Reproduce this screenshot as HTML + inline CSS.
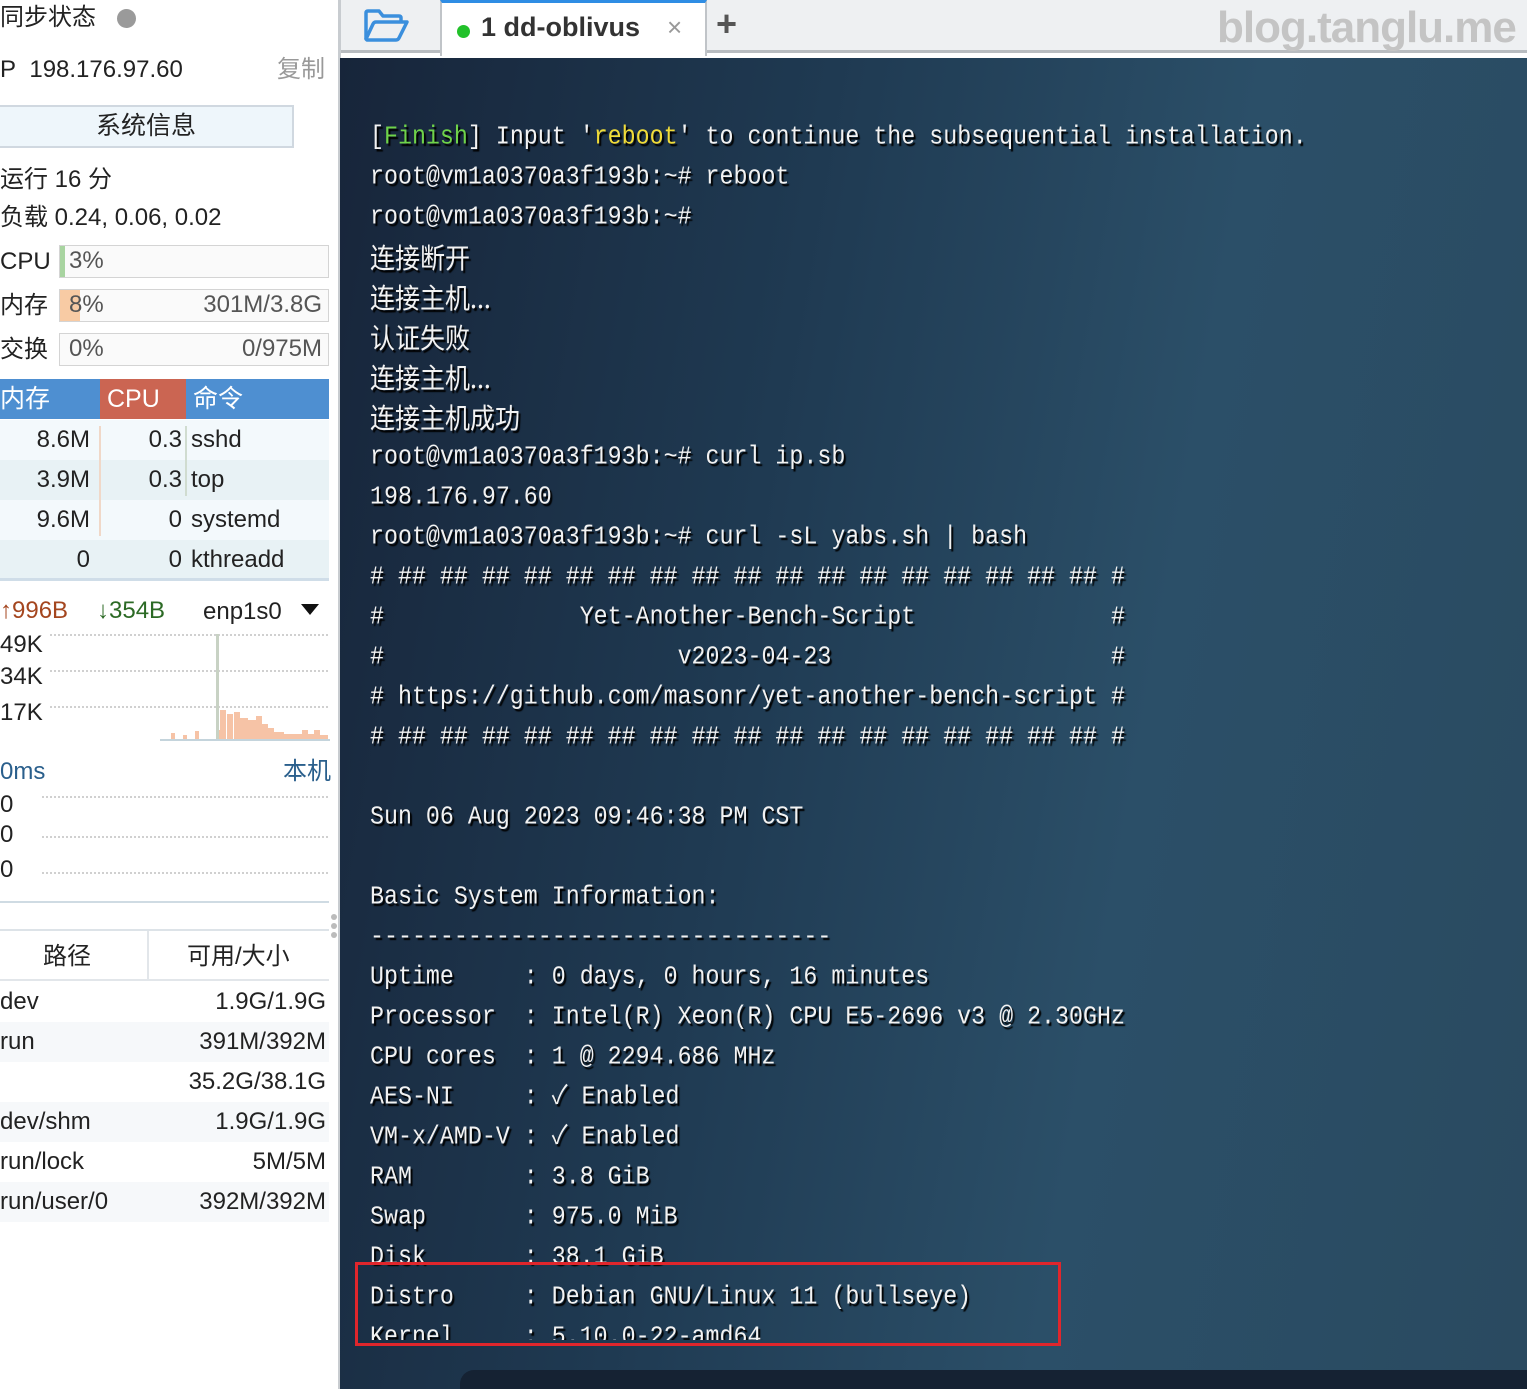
<!DOCTYPE html>
<html><head><meta charset="utf-8"><style>
*{margin:0;padding:0;box-sizing:border-box}
body{width:1527px;height:1389px;overflow:hidden;background:#fff;position:relative;font-family:"Liberation Sans","Noto Sans CJK SC",sans-serif;color:#222}
.a{position:absolute;white-space:nowrap}
.lt{font-size:24px;line-height:30px}
.bar{position:absolute;left:59px;width:270px;height:33px;border:1px solid #d4d4d4;background:#fafafa}
.row{position:absolute;left:0;width:329px;height:40px;font-size:24px;line-height:40px}
.term{position:absolute;left:340px;top:58px;width:1187px;height:1331px;background:linear-gradient(100deg,#17253a 0%,#1f3a52 35%,#2b4f68 65%,#2a4a60 100%);overflow:hidden}
.tl{position:absolute;left:30px;font-family:"Liberation Mono","Noto Sans CJK SC",monospace;font-size:23.3px;color:#f2f2f2;white-space:pre;line-height:40px;text-shadow:2px 2px 1px #000;transform:scaleY(1.12);transform-origin:0 50%}
.cj{font-family:"Noto Sans CJK SC",sans-serif;font-size:25px}
.dot{position:absolute;height:0;border-top:2px dotted #d0d0d0}
</style></head><body>
<div class="a lt" style="left:0;top:3px">同步状态</div>
<div class="a" style="left:117px;top:9px;width:19px;height:19px;border-radius:50%;background:#9a9a9a"></div>
<div class="a lt" style="left:0;top:55px">P&nbsp;&nbsp;198.176.97.60</div>
<div class="a lt" style="left:277px;top:55px;color:#999">复制</div>
<div class="a" style="left:0;top:105px;width:294px;height:43px;background:#eef6fb;border:2px solid #d0d8e0;border-left:none;text-align:center;font-size:25px;line-height:39px">系统信息</div>
<div class="a lt" style="left:0;top:165px">运行 16 分</div>
<div class="a lt" style="left:0;top:203px">负载 0.24, 0.06, 0.02</div>
<div class="a lt" style="left:0;top:247px">CPU</div>
<div class="bar" style="top:245px"><div style="position:absolute;left:0;top:0;width:5px;height:31px;background:#a8d4a0"></div><span class="a lt" style="left:9px;top:0;color:#555">3%</span></div>
<div class="a lt" style="left:0;top:291px">内存</div>
<div class="bar" style="top:289px"><div style="position:absolute;left:0;top:0;width:20px;height:31px;background:#f8cba4"></div><span class="a lt" style="left:9px;top:0;color:#555">8%</span><span class="a lt" style="right:6px;top:0;color:#555">301M/3.8G</span></div>
<div class="a lt" style="left:0;top:335px">交换</div>
<div class="bar" style="top:333px"><span class="a lt" style="left:9px;top:0;color:#555">0%</span><span class="a lt" style="right:6px;top:0;color:#555">0/975M</span></div>
<div class="a" style="left:0;top:379px;width:100px;height:40px;background:#4e8fd1;color:#fff;font-size:25px;line-height:40px">内存</div>
<div class="a" style="left:100px;top:379px;width:86px;height:40px;background:#cb6552;color:#fff;font-size:25px;line-height:40px;padding-left:7px">CPU</div>
<div class="a" style="left:186px;top:379px;width:143px;height:40px;background:#4e8fd1;color:#fff;font-size:25px;line-height:40px;padding-left:7px">命令</div>
<div class="row" style="top:420px;background:#f3f9fc"><span class="a" style="right:239px">8.6M</span><span class="a" style="right:147px">0.3</span><span class="a" style="left:191px">sshd</span></div>
<div class="row" style="top:460px;background:#e8f2f5"><span class="a" style="right:239px">3.9M</span><span class="a" style="right:147px">0.3</span><span class="a" style="left:191px">top</span></div>
<div class="row" style="top:500px;background:#f3f9fc"><span class="a" style="right:239px">9.6M</span><span class="a" style="right:147px">0</span><span class="a" style="left:191px">systemd</span></div>
<div class="row" style="top:540px;background:#e8f2f5"><span class="a" style="right:239px">0</span><span class="a" style="right:147px">0</span><span class="a" style="left:191px">kthreadd</span></div>
<div class="a" style="left:99px;top:426px;width:2px;height:110px;background:#f0d8c8"></div>
<div class="a" style="left:185px;top:426px;width:2px;height:70px;background:#d0dcd0"></div>
<div class="a" style="left:0;top:578px;width:329px;height:3px;background:#cfdde8"></div>
<div class="a lt" style="left:0;top:596px;color:#a4461f">↑996B</div>
<div class="a lt" style="left:97px;top:596px;color:#2c6a25"><b>↓</b>354B</div>
<div class="a lt" style="left:203px;top:597px">enp1s0</div>
<div class="a" style="left:301px;top:604px;width:0;height:0;border-left:9px solid transparent;border-right:9px solid transparent;border-top:11px solid #111"></div>
<div class="a lt" style="left:0;top:630px">49K</div><div class="a lt" style="left:0;top:662px">34K</div><div class="a lt" style="left:0;top:698px">17K</div>
<div class="dot" style="left:50px;top:634px;width:278px"></div>
<div class="dot" style="left:50px;top:670px;width:278px"></div>
<div class="dot" style="left:50px;top:706px;width:278px"></div>
<svg class="a" style="left:160px;top:634px" width="170" height="108">
<g fill="#f6c3a6"><rect x="11" y="99" width="4" height="7"/><rect x="23" y="101" width="4" height="5"/><rect x="35" y="97" width="4" height="9"/><rect x="57" y="96" width="4" height="10"/><rect x="60" y="76" width="6" height="30"/><rect x="67" y="80" width="6" height="26"/><rect x="74" y="78" width="6" height="28"/><rect x="80" y="84" width="8" height="22"/><rect x="88" y="86" width="8" height="20"/><rect x="96" y="82" width="6" height="24"/><rect x="102" y="90" width="6" height="16"/><rect x="108" y="94" width="6" height="12"/><rect x="114" y="98" width="10" height="8"/><rect x="124" y="100" width="18" height="6"/><rect x="142" y="96" width="6" height="10"/><rect x="148" y="100" width="6" height="6"/><rect x="154" y="96" width="6" height="10"/><rect x="160" y="101" width="8" height="5"/></g>
<rect x="56" y="0" width="3" height="106" fill="#c8d2c4"/>
<rect x="0" y="105" width="170" height="2" fill="#c4d4dc"/></svg>
<div class="a lt" style="left:0;top:757px;color:#2a5f8c">0ms</div>
<div class="a lt" style="left:283px;top:757px;color:#2a5f8c">本机</div>
<div class="a lt" style="left:0;top:790px">0</div><div class="a lt" style="left:0;top:820px">0</div><div class="a lt" style="left:0;top:855px">0</div>
<div class="dot" style="left:42px;top:796px;width:286px"></div>
<div class="dot" style="left:42px;top:836px;width:286px"></div>
<div class="dot" style="left:42px;top:872px;width:286px"></div>
<div class="a" style="left:0;top:901px;width:329px;height:2px;background:#cfdbe3"></div>
<div class="a" style="left:331px;top:914px;width:6px;height:6px;border-radius:50%;background:#bbb"></div>
<div class="a" style="left:331px;top:923px;width:6px;height:6px;border-radius:50%;background:#bbb"></div>
<div class="a" style="left:331px;top:932px;width:6px;height:6px;border-radius:50%;background:#bbb"></div>
<div class="a" style="left:0;top:929px;width:329px;height:2px;background:#dde3e8"></div>
<div class="a" style="left:147px;top:931px;width:2px;height:49px;background:#e2e6ea"></div>
<div class="a lt" style="left:43px;top:942px">路径</div>
<div class="a lt" style="left:187px;top:942px">可用/大小</div>
<div class="a" style="left:0;top:979px;width:329px;height:2px;background:#e2e6ea"></div>
<div class="row" style="top:982px"><span class="a" style="left:0">dev</span><span class="a" style="right:3px">1.9G/1.9G</span></div>
<div class="row" style="top:1022px;background:#f6f8fa"><span class="a" style="left:0">run</span><span class="a" style="right:3px">391M/392M</span></div>
<div class="row" style="top:1062px"><span class="a" style="right:3px">35.2G/38.1G</span></div>
<div class="row" style="top:1102px;background:#f6f8fa"><span class="a" style="left:0">dev/shm</span><span class="a" style="right:3px">1.9G/1.9G</span></div>
<div class="row" style="top:1142px"><span class="a" style="left:0">run/lock</span><span class="a" style="right:3px">5M/5M</span></div>
<div class="row" style="top:1182px;background:#f6f8fa"><span class="a" style="left:0">run/user/0</span><span class="a" style="right:3px">392M/392M</span></div>
<div class="a" style="left:338px;top:0;width:3px;height:1389px;background:#c8ccd0"></div>
<div class="a" style="left:341px;top:0;width:1186px;height:58px;background:#eef0f2"></div>
<div class="a" style="left:341px;top:50px;width:1186px;height:3px;background:#b8bcc0"></div>
<div class="a" style="left:341px;top:53px;width:1186px;height:5px;background:#fff"></div>
<svg class="a" style="left:363px;top:8px" width="48" height="36" viewBox="0 0 48 36"><path d="M3 31V5q0-2 2-2h11l4 5h16q2 0 2 2v5" fill="none" stroke="#3b8fdd" stroke-width="3.5" stroke-linejoin="round"/><path d="M3 31l7-15q1-2 3-2h31l-8 16q-1 2-3 2H4z" fill="none" stroke="#3b8fdd" stroke-width="3.5" stroke-linejoin="round"/></svg>
<div class="a" style="left:440px;top:0;width:267px;height:56px;background:#fff;border-left:2px solid #c0c4c8;border-right:2px solid #c0c4c8;border-top:3px solid #2f8de4"></div>
<div class="a" style="left:457px;top:25px;width:13px;height:13px;border-radius:50%;background:#22c12a"></div>
<div class="a" style="left:481px;top:9px;font-size:27px;font-weight:bold;color:#333;line-height:36px">1 dd-oblivus</div>
<div class="a" style="left:667px;top:11px;font-size:26px;color:#999;line-height:32px">×</div>
<div class="a" style="left:716px;top:4px;font-size:36px;font-weight:bold;color:#555;line-height:40px">+</div>
<div class="a" style="left:1217px;top:2px;font-size:44px;font-weight:bold;color:#c4c4c4;line-height:52px;letter-spacing:-1px">blog.tanglu.me</div>
<div class="term">
<div style="position:absolute;left:120px;top:1312px;width:1100px;height:40px;background:#152233;border-radius:14px 0 0 0"></div>
<div style="position:absolute;left:0;top:0;width:1187px;height:1282px;overflow:hidden">
<div class="tl" style="top:59px">[<span style="color:#6fd34a">Finish</span>] Input '<span style="color:#f0dc3a">reboot</span>' to continue the subsequential installation.</div>
<div class="tl" style="top:99px">root@vm1a0370a3f193b:~# reboot</div>
<div class="tl" style="top:139px">root@vm1a0370a3f193b:~#</div>
<div class="tl cj" style="top:179px">连接断开</div>
<div class="tl cj" style="top:219px">连接主机...</div>
<div class="tl cj" style="top:259px">认证失败</div>
<div class="tl cj" style="top:299px">连接主机...</div>
<div class="tl cj" style="top:339px">连接主机成功</div>
<div class="tl" style="top:379px">root@vm1a0370a3f193b:~# curl ip.sb</div>
<div class="tl" style="top:419px">198.176.97.60</div>
<div class="tl" style="top:459px">root@vm1a0370a3f193b:~# curl -sL yabs.sh | bash</div>
<div class="tl" style="top:499px"># ## ## ## ## ## ## ## ## ## ## ## ## ## ## ## ## ## #</div>
<div class="tl" style="top:539px">#              Yet-Another-Bench-Script              #</div>
<div class="tl" style="top:579px">#                     v2023-04-23                    #</div>
<div class="tl" style="top:619px"># https://github.com/masonr/yet-another-bench-script #</div>
<div class="tl" style="top:659px"># ## ## ## ## ## ## ## ## ## ## ## ## ## ## ## ## ## #</div>
<div class="tl" style="top:739px">Sun 06 Aug 2023 09:46:38 PM CST</div>
<div class="tl" style="top:819px">Basic System Information:</div>
<div class="tl" style="top:859px">---------------------------------</div>
<div class="tl" style="top:899px">Uptime     : 0 days, 0 hours, 16 minutes</div>
<div class="tl" style="top:939px">Processor  : Intel(R) Xeon(R) CPU E5-2696 v3 @ 2.30GHz</div>
<div class="tl" style="top:979px">CPU cores  : 1 @ 2294.686 MHz</div>
<div class="tl" style="top:1019px">AES-NI     : ✓ Enabled</div>
<div class="tl" style="top:1059px">VM-x/AMD-V : ✓ Enabled</div>
<div class="tl" style="top:1099px">RAM        : 3.8 GiB</div>
<div class="tl" style="top:1139px">Swap       : 975.0 MiB</div>
<div class="tl" style="top:1179px">Disk       : 38.1 GiB</div>
<div class="tl" style="top:1219px">Distro     : Debian GNU/Linux 11 (bullseye)</div>
<div class="tl" style="top:1259px">Kernel     : 5.10.0-22-amd64</div>
</div>
<div style="position:absolute;left:15px;top:1204px;width:706px;height:84px;border:3px solid #e0262c"></div>
</div>
</body></html>
